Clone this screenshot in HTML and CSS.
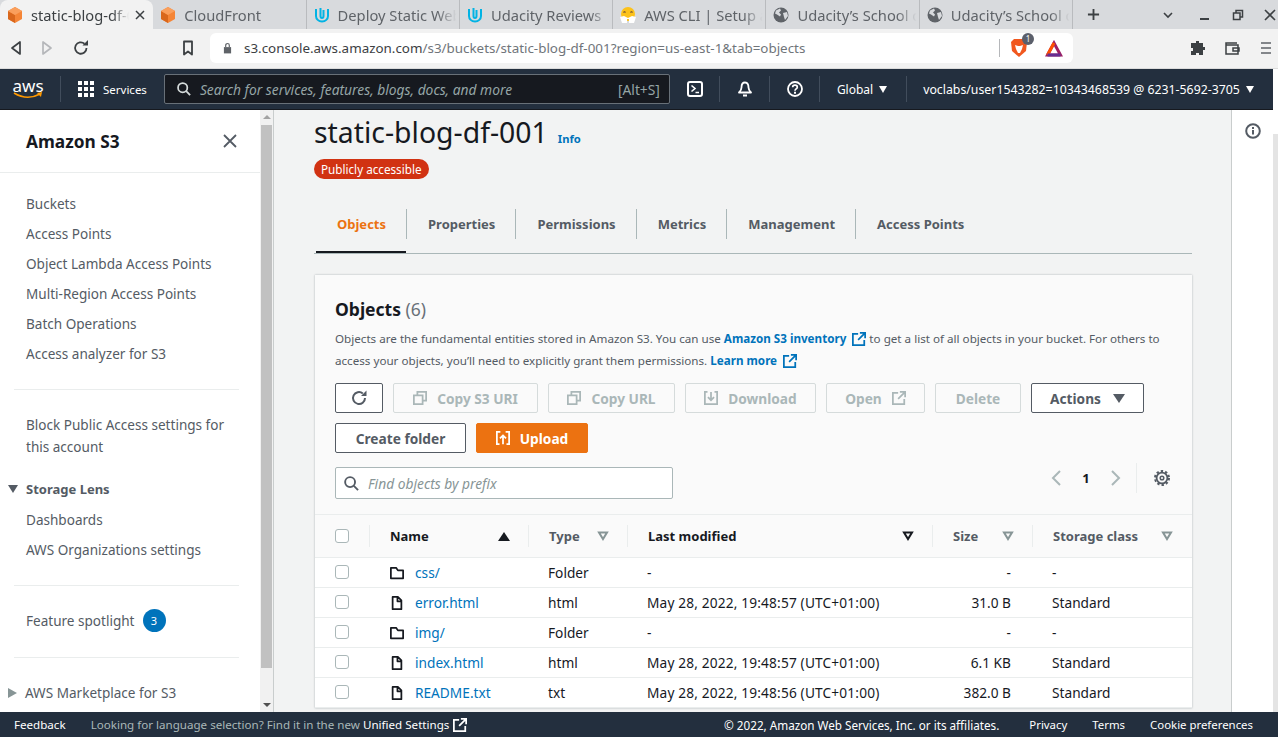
FILE: index.html
```html
<!DOCTYPE html>
<html lang="en">
<head>
  <meta charset="UTF-8" />
  <title>S3 Management Console</title>
  <link rel="stylesheet" href="styles.css">
</head>
<body>
  <svg class="sprite" width="0" height="0">
    <symbol id="cube" viewBox="0 0 16 16">
      <path fill="#f58536" d="M8 0l7 4v8l-7 4-7-4V4z"/>
      <path fill="#d9671c" d="M8 8v8l-7-4V4z"/>
      <path fill="#fa9f5c" d="M8 0l7 4-7 4-7-4z"/>
    </symbol>
    <symbol id="udacity" viewBox="0 0 16 16">
      <path fill="none" stroke="#02b3e4" stroke-width="2" d="M2 2v7c0 3 2.500 5.500 6 5.500S14 12 14 9V2M6.500 1v8c0 1 .6 2 1.500 2s1.500-1 1.500-2V3"/>
    </symbol>
    <symbol id="globe" viewBox="0 0 16 16">
      <circle cx="8" cy="8" r="7.500" fill="#5f6368"/>
      <path fill="#d8dadd" d="M3 3.500l4-2 1 2-2 2 2 2-1 2-3-2-2-1zM10 6l4-1 1 4-3 4-1-3z"/>
    </symbol>
    <symbol id="copy" viewBox="0 0 16 16">
      <path fill="none" stroke="currentColor" stroke-width="2" d="M1 5h10v10H1zM5 5V1h10v10h-4"/>
    </symbol>
    <symbol id="external" viewBox="0 0 16 16">
      <path fill="none" stroke="currentColor" stroke-width="2" d="M7 2H1v13h13V9M9 1h6v6M15 1L7 9"/>
    </symbol>
    <symbol id="folder" viewBox="0 0 16 16">
      <path fill="none" stroke="#16191f" stroke-width="2" stroke-linejoin="round" d="M1 2h6l2 3h6v9H1z"/>
    </symbol>
    <symbol id="file" viewBox="0 0 16 16">
      <path fill="none" stroke="#16191f" stroke-width="2" stroke-linejoin="round" d="M3 1h6l4 4v10H3zM8.500 1v5H13"/>
    </symbol>
    <symbol id="sort" viewBox="0 0 12 10">
      <path fill="none" stroke="currentColor" stroke-width="2" d="M2 1.500h8L6 8z"/>
    </symbol>
    <symbol id="search" viewBox="0 0 16 16">
      <circle cx="6.500" cy="6.500" r="5.300" fill="none" stroke="currentColor" stroke-width="2"/>
      <path stroke="currentColor" stroke-width="2" d="M10.500 10.500L15 15"/>
    </symbol>
  </svg>

  <div class="tabstrip">
    <div class="btab active">
      <svg class="fav"><use href="#cube"/></svg><span class="btab-title">static-blog-df-001</span>
      <svg class="btab-close" viewBox="0 0 10 10"><path stroke="#3c4043" stroke-width="1.500" d="M1 1l8 8M9 1l-8 8"/></svg>
    </div>
    <div class="btab"><svg class="fav"><use href="#cube"/></svg><span class="btab-title">CloudFront</span></div>
    <div class="btab"><svg class="fav"><use href="#udacity"/></svg><span class="btab-title">Deploy Static Website</span></div>
    <div class="btab"><svg class="fav"><use href="#udacity"/></svg><span class="btab-title">Udacity Reviews</span></div>
    <div class="btab">
      <svg class="fav" viewBox="0 0 16 16">
        <circle cx="8" cy="7" r="7" fill="#fcc21b"/>
        <path fill="none" stroke="#5d4037" stroke-width="1.200" d="M3.500 5.500q1-1.500 2 0M10.500 5.500q1-1.500 2 0"/>
        <path fill="#fff" d="M0 10l4-1 4 2 4-2 4 1-2 6H9V12H7v4H2z"/>
      </svg><span class="btab-title">AWS CLI | Setup and Install</span>
    </div>
    <div class="btab"><svg class="fav"><use href="#globe"/></svg><span class="btab-title">Udacity’s School of Cloud</span></div>
    <div class="btab"><svg class="fav"><use href="#globe"/></svg><span class="btab-title">Udacity’s School of Cloud</span></div>
    <svg class="newtab" viewBox="0 0 14 14"><path stroke="#3c4043" stroke-width="2" d="M7 1v12M1 7h12"/></svg>
    <div class="winctl">
      <svg viewBox="0 0 12 12"><path fill="none" stroke="#3c4043" stroke-width="1.600" d="M2 4l4 4 4-4"/></svg>
      <svg viewBox="0 0 12 12"><path stroke="#3c4043" stroke-width="2" d="M1 10h9"/></svg>
      <svg viewBox="0 0 12 12"><path fill="none" stroke="#3c4043" stroke-width="1.500" d="M1.500 4h6.500v6.500H1.500zM4 4V1.500h6.500V8H8"/></svg>
      <svg viewBox="0 0 12 12"><path stroke="#3c4043" stroke-width="1.600" d="M1 1l10 10M11 1L1 11"/></svg>
    </div>
  </div>

  <div class="toolbar">
    <svg class="tool back" viewBox="0 0 12 16"><path fill="none" stroke="#3c4043" stroke-width="1.700" stroke-linejoin="round" d="M10 2v12L2 8z"/></svg>
    <svg class="tool fwd" viewBox="0 0 12 16"><path fill="none" stroke="#b5b7ba" stroke-width="1.700" stroke-linejoin="round" d="M2 2v12l8-6z"/></svg>
    <svg class="tool reload" viewBox="0 0 16 16"><path fill="none" stroke="#3c4043" stroke-width="1.800" d="M13.500 8a5.700 5.700 0 1 1-2-4.300"/><path fill="#3c4043" d="M9.500 5.500h5.500V0z"/></svg>
    <svg class="tool bookmark" viewBox="0 0 12 16"><path fill="none" stroke="#3c4043" stroke-width="1.800" stroke-linejoin="round" d="M2 1.500h8v13l-4-3-4 3z"/></svg>
    <div class="urlbar">
      <svg class="lock" viewBox="0 0 10 12"><path fill="#5f6368" d="M1 5h8v7H1z"/><path fill="none" stroke="#5f6368" stroke-width="1.300" d="M3 5V3a2 2 0 0 1 4 0v2"/></svg>
      <span class="url">s3.console.aws.amazon.com<span class="url-dim">/s3/buckets/static-blog-df-001?region=us-east-1&amp;tab=objects</span></span>
      <span class="url-sep"></span>
      <span class="brave">
        <svg viewBox="0 0 16 18" width="16" height="18"><path fill="#f1581f" d="M3 0h10l3 3-1 9-7 6-7-6-1-9z"/><path fill="#fff" d="M4 6l3 1h2l3-1-1 4-2 4H7L5 10z"/></svg>
        <span class="brave-count">1</span>
      </span>
      <svg class="bat" viewBox="0 0 18 17" width="18" height="17">
        <path fill="none" stroke="#9e1f63" stroke-width="3" d="M9 3L2.500 15h13z"/>
        <path fill="none" stroke="#ff5000" stroke-width="3" d="M9 3L2.500 15"/>
        <path fill="none" stroke="#662d91" stroke-width="3" d="M2.500 15h13"/>
      </svg>
    </div>
    <svg class="tool puzzle" viewBox="0 0 16 16"><path fill="#3c4043" d="M6 1h3v2h4v4h2v3h-2v5H9v-2H6v2H1v-4h2V8H1V3h5z"/></svg>
    <svg class="tool wallet" viewBox="0 0 16 16"><path fill="none" stroke="#3c4043" stroke-width="1.500" d="M13 3H2v11h12v-9H2M9 8h6v3H9z"/></svg>
    <svg class="tool menu" viewBox="0 0 14 14"><path stroke="#5f6368" stroke-width="1.700" d="M2 2h10M2 7h10M2 12h10"/></svg>
  </div>

  <nav class="topnav">
    <div class="logo">
      <span class="logo-text">aws</span>
      <svg viewBox="0 0 30 8" width="30" height="8"><path fill="none" stroke="#ff9900" stroke-width="1.500" d="M1 1q13 8 26 1"/><path fill="#ff9900" d="M24 1l5-1-1 5z"/></svg>
    </div>
    <span class="nav-sep first"></span>
    <svg class="grid-icon" viewBox="0 0 16 16"><path fill="#fff" d="M0 0h4v4H0zM6 0h4v4H6zM12 0h4v4h-4zM0 6h4v4H0zM6 6h4v4H6zM12 6h4v4h-4zM0 12h4v4H0zM6 12h4v4H6zM12 12h4v4h-4z"/></svg>
    <span class="services">Services</span>
    <div class="nav-search">
      <svg class="nav-search-icon"><use href="#search"/></svg>
      <span class="nav-placeholder">Search for services, features, blogs, docs, and more</span>
      <span class="nav-shortcut">[Alt+S]</span>
    </div>
    <svg class="nav-icon term" viewBox="0 0 16 16"><rect x="1" y="1" width="14" height="14" rx="2" fill="none" stroke="#fff" stroke-width="2"/><path fill="none" stroke="#fff" stroke-width="1.600" d="M4.500 4.500L8 7.500l-3.500 3M8.500 11.500H12"/></svg>
    <span class="nav-sep"></span>
    <svg class="nav-icon" viewBox="0 0 16 16"><path fill="none" stroke="#fff" stroke-width="1.800" stroke-linejoin="round" d="M8 1.500c-3 0-3.500 3-3.500 5s-1 3.500-2.500 5h12c-1.500-1.500-2.500-3-2.500-5s-.5-5-3.500-5zM6 14.500h4"/></svg>
    <span class="nav-sep"></span>
    <svg class="nav-icon" viewBox="0 0 16 16"><circle cx="8" cy="8" r="7" fill="none" stroke="#fff" stroke-width="1.800"/><path fill="none" stroke="#fff" stroke-width="1.700" d="M5.700 6.200C5.700 3.500 10.300 3.500 10.300 6.200c0 1.700-2.300 1.700-2.300 3.500"/><path fill="#fff" d="M7 10.800h2v2H7z"/></svg>
    <span class="nav-sep"></span>
    <span class="nav-menu region">Global<i class="caret"></i></span>
    <span class="nav-sep"></span>
    <span class="nav-menu account">voclabs/user1543282=10343468539 @ 6231-5692-3705<i class="caret"></i></span>
  </nav>

  <div class="main">
    <aside class="sidebar">
      <div class="side-head">
        <h2>Amazon S3</h2>
        <svg viewBox="0 0 14 14" width="14" height="14"><path stroke="#545b64" stroke-width="1.800" d="M1 1l12 12M13 1L1 13"/></svg>
      </div>
      <ul class="side-list">
        <li>Buckets</li>
        <li>Access Points</li>
        <li>Object Lambda Access Points</li>
        <li>Multi-Region Access Points</li>
        <li>Batch Operations</li>
        <li>Access analyzer for S3</li>
      </ul>
      <hr class="side-div">
      <p class="side-block">Block Public Access settings for this account</p>
      <div class="side-group"><i class="tri-down"></i>Storage Lens</div>
      <ul class="side-list sub">
        <li>Dashboards</li>
        <li>AWS Organizations settings</li>
      </ul>
      <hr class="side-div">
      <div class="side-spot">Feature spotlight <span class="spot-badge">3</span></div>
      <hr class="side-div">
      <div class="side-market"><i class="tri-right"></i>AWS Marketplace for S3</div>
    </aside>

    <div class="side-scroll">
      <i class="arrow-up"></i>
      <div class="side-thumb"></div>
      <i class="arrow-down"></i>
    </div>

    <main class="content">
      <div class="title-row">
        <h1>static-blog-df-001</h1>
        <a class="info">Info</a>
      </div>
      <span class="public-badge">Publicly accessible</span>

      <div class="ctabs">
        <span class="ctab active">Objects</span>
        <span class="ctab">Properties</span>
        <span class="ctab">Permissions</span>
        <span class="ctab">Metrics</span>
        <span class="ctab">Management</span>
        <span class="ctab">Access Points</span>
      </div>

      <section class="card">
        <div class="card-top">
          <h2 class="card-title">Objects <span class="count">(6)</span></h2>
          <p class="card-desc">Objects are the fundamental entities stored in Amazon S3. You can use <a class="blue">Amazon S3 inventory <svg class="ext"><use href="#external"/></svg></a> to get a list of all objects in your bucket. For others to access your objects, you’ll need to explicitly grant them permissions. <a class="blue">Learn more <svg class="ext"><use href="#external"/></svg></a></p>

          <div class="btn-row">
            <button class="btn refresh"><svg viewBox="0 0 16 16" width="16" height="16"><path fill="none" stroke="#545b64" stroke-width="2" d="M14 8a6 6 0 1 1-2.200-4.600"/><path fill="#545b64" d="M10 6h5.500V.5z"/></svg></button>
            <button class="btn off w-s3uri"><svg class="ico"><use href="#copy"/></svg>Copy S3 URI</button>
            <button class="btn off w-url"><svg class="ico"><use href="#copy"/></svg>Copy URL</button>
            <button class="btn off w-dl"><svg class="ico" viewBox="0 0 16 16"><path fill="none" stroke="currentColor" stroke-width="2" d="M4 1H1v14h14V1h-3M8 1v9M4.500 7L8 10.500 11.500 7"/></svg>Download</button>
            <button class="btn off w-open">Open<svg class="ico after"><use href="#external"/></svg></button>
            <button class="btn off w-del">Delete</button>
            <button class="btn w-act">Actions<i class="btn-caret"></i></button>
          </div>
          <div class="btn-row second">
            <button class="btn w-folder">Create folder</button>
            <button class="btn primary w-up"><svg class="ico" viewBox="0 0 16 16"><path fill="none" stroke="#fff" stroke-width="2" d="M5 1H1v14h3M11 1h4v14h-3M8 15V5M4.500 8.500L8 5l3.500 3.500"/></svg>Upload</button>
          </div>

          <div class="find-row">
            <div class="find">
              <svg class="find-icon"><use href="#search"/></svg>
              <span>Find objects by prefix</span>
            </div>
            <div class="pager">
              <svg viewBox="0 0 10 16" width="10" height="16"><path fill="none" stroke="#aab7b8" stroke-width="2" d="M9 1L2 8l7 7"/></svg>
              <b>1</b>
              <svg viewBox="0 0 10 16" width="10" height="16"><path fill="none" stroke="#aab7b8" stroke-width="2" d="M1 1l7 7-7 7"/></svg>
              <span class="pager-sep"></span>
              <svg viewBox="0 0 16 16" width="16" height="16"><circle cx="8" cy="8" r="5.400" fill="none" stroke="#545b64" stroke-width="1.800"/><circle cx="8" cy="8" r="7" fill="none" stroke="#545b64" stroke-width="2" stroke-dasharray="2.400 2.100"/><circle cx="8" cy="8" r="1.800" fill="none" stroke="#545b64" stroke-width="1.500"/></svg>
            </div>
          </div>
        </div>

        <div class="tbl-head tbl-grid">
          <div class="th chk"><i class="box"></i></div>
          <div class="th dark">Name<i class="sort-up"></i></div>
          <div class="th">Type<svg class="sort"><use href="#sort"/></svg></div>
          <div class="th dark">Last modified<svg class="sort black"><use href="#sort"/></svg></div>
          <div class="th">Size<svg class="sort"><use href="#sort"/></svg></div>
          <div class="th">Storage class<svg class="sort"><use href="#sort"/></svg></div>
        </div>

        <div class="tr tbl-grid">
          <div class="td chk"><i class="box"></i></div>
          <div class="td name"><svg class="obj"><use href="#folder"/></svg><a>css/</a></div>
          <div class="td">Folder</div><div class="td">-</div><div class="td num">-</div><div class="td">-</div>
        </div>
        <div class="tr tbl-grid">
          <div class="td chk"><i class="box"></i></div>
          <div class="td name"><svg class="obj"><use href="#file"/></svg><a>error.html</a></div>
          <div class="td">html</div><div class="td date">May 28, 2022, 19:48:57 (UTC+01:00)</div><div class="td num">31.0 B</div><div class="td">Standard</div>
        </div>
        <div class="tr tbl-grid">
          <div class="td chk"><i class="box"></i></div>
          <div class="td name"><svg class="obj"><use href="#folder"/></svg><a>img/</a></div>
          <div class="td">Folder</div><div class="td">-</div><div class="td num">-</div><div class="td">-</div>
        </div>
        <div class="tr tbl-grid">
          <div class="td chk"><i class="box"></i></div>
          <div class="td name"><svg class="obj"><use href="#file"/></svg><a>index.html</a></div>
          <div class="td">html</div><div class="td date">May 28, 2022, 19:48:57 (UTC+01:00)</div><div class="td num">6.1 KB</div><div class="td">Standard</div>
        </div>
        <div class="tr tbl-grid">
          <div class="td chk"><i class="box"></i></div>
          <div class="td name"><svg class="obj"><use href="#file"/></svg><a>README.txt</a></div>
          <div class="td">txt</div><div class="td date">May 28, 2022, 19:48:56 (UTC+01:00)</div><div class="td num">382.0 B</div><div class="td">Standard</div>
        </div>
      </section>
    </main>

    <aside class="tools">
      <svg viewBox="0 0 16 16" width="16" height="16"><circle cx="8" cy="8" r="6.800" fill="none" stroke="#545b64" stroke-width="2"/><path fill="#545b64" d="M7 7h2v4.500H7zM7 4h2v2H7z"/></svg>
    </aside>
    <div class="page-scroll"><div class="page-thumb"></div></div>
  </div>

  <footer class="footer">
    <span class="foot-feedback">Feedback</span>
    <span class="foot-lang">Looking for language selection? Find it in the new <a>Unified Settings</a></span>
    <svg class="foot-ext"><use href="#external"/></svg>
    <span class="foot-copy">© 2022, Amazon Web Services, Inc. or its affiliates.</span>
    <a class="foot-link">Privacy</a>
    <a class="foot-link">Terms</a>
    <a class="foot-link">Cookie preferences</a>
  </footer>
</body>
</html>
```

FILE: styles.css
```css
html, body {
  margin: 0;
  padding: 0;
  height: 737px;
  overflow: hidden;
  background: #fff;
  font-family: "Noto Sans", sans-serif;
  color: #16191f;
}

body {
  display: flex;
  flex-direction: column;
}

.sprite {
  position: absolute;
}

i {
  display: block;
}

/* browser tabs */
.tabstrip {
  display: flex;
  align-items: center;
  height: 29px;
  flex: none;
  background: #d8dadd;
}

.btab {
  position: relative;
  display: flex;
  align-items: center;
  width: 153.300px;
  height: 29px;
  box-sizing: border-box;
  padding-left: 7px;
  border-right: 1px solid #b9bbbe;
  overflow: hidden;
  flex: none;
  color: #5f6368;
  font-size: 14.700px;
}

.btab:nth-child(1) {
  border-right-color: transparent;
}

.btab.active {
  background: #f2f2f2;
  border-radius: 8px 8px 0 0;
  color: #3c4043;
}

.fav {
  width: 16px;
  height: 16px;
  flex: none;
  margin-right: 8px;
}

.btab-title {
  white-space: nowrap;
  overflow: hidden;
  flex: 1;
  -webkit-mask-image: linear-gradient(to right, #000 82%, transparent 98%);
  mask-image: linear-gradient(to right, #000 82%, transparent 98%);
}

.btab-close {
  width: 10px;
  height: 10px;
  flex: none;
  margin: 0 7px 0 4px;
}

.newtab {
  width: 13px;
  height: 13px;
  margin-left: 14px;
  flex: none;
}

.winctl {
  display: flex;
  align-items: center;
  margin-left: auto;
  gap: 20.500px;
  padding-right: 2px;
}

.winctl svg {
  width: 12px;
  height: 12px;
}

.winctl svg:first-child {
  margin-right: 5px;
}

.toolbar {
  display: flex;
  align-items: center;
  height: 40px;
  flex: none;
  box-sizing: border-box;
  padding: 0 0 1px 10px;
  background: #f2f2f2;
  border-bottom: 1px solid #dcdcdc;
}

.tool {
  flex: none;
}

.back { width: 12px; height: 16px; }
.fwd { width: 12px; height: 16px; margin-left: 19px; }
.reload { width: 16px; height: 16px; margin-left: 20px; }
.bookmark { width: 12px; height: 16px; margin-left: 93px; }
.puzzle { width: 16px; height: 16px; margin-left: 117px; }
.wallet { width: 16px; height: 16px; margin-left: 18px; }
.menu { width: 14px; height: 14px; margin-left: 19px; }

.urlbar {
  display: flex;
  align-items: center;
  width: 863px;
  height: 30px;
  margin-left: 16px;
  background: #fff;
  border-radius: 6px;
  box-sizing: border-box;
  padding-left: 13px;
  font-size: 13.400px;
}

.lock {
  width: 9px;
  height: 12px;
  margin-right: 12px;
  flex: none;
}

.url {
  color: #3c4043;
  white-space: nowrap;
}

.url-dim {
  color: #70757a;
}

.url-sep {
  width: 1px;
  height: 18px;
  background: #b5b7ba;
  margin-left: auto;
}

.brave {
  position: relative;
  display: flex;
  margin-left: 11px;
}

.brave-count {
  position: absolute;
  left: 11px;
  top: -6px;
  width: 12px;
  height: 12px;
  border-radius: 50%;
  background: #5b5f6b;
  color: #fff;
  font-size: 8px;
  line-height: 12px;
  text-align: center;
}

.bat {
  margin: 0 10px 0 18px;
  flex: none;
}

/* aws top nav */
.topnav {
  display: flex;
  align-items: center;
  width: 1273px;
  height: 41px;
  flex: none;
  box-sizing: border-box;
  border-bottom: 1px solid #16191f;
  background: #232f3e;
  color: #fff;
  font-size: 12px;
}

.logo {
  display: flex;
  flex-direction: column;
  align-items: center;
  width: 30px;
  margin-left: 13px;
  flex: none;
}

.logo-text {
  font-size: 17px;
  line-height: 13px;
  height: 14px;
}

.logo svg {
  display: block;
  margin-top: -1px;
}

.nav-sep {
  width: 1px;
  height: 26px;
  background: #414d5c;
  flex: none;
}

.nav-sep.first {
  margin-left: 17px;
}

.grid-icon {
  width: 16px;
  height: 16px;
  margin-left: 17px;
  flex: none;
}

.services {
  margin-left: 9px;
  font-size: 11.500px;
}

.nav-search {
  display: flex;
  align-items: center;
  width: 506px;
  height: 30px;
  margin-left: 17px;
  box-sizing: border-box;
  padding: 0 9px 0 12px;
  background: #16191f;
  border: 1px solid #687078;
  border-radius: 2px;
  flex: none;
}

.nav-search-icon {
  width: 14px;
  height: 14px;
  color: #d5dbdb;
  flex: none;
}

.nav-placeholder {
  margin-left: 9px;
  font-style: italic;
  font-size: 13.800px;
  color: #95a5a6;
  white-space: nowrap;
}

.nav-shortcut {
  margin-left: auto;
  font-size: 13.800px;
  color: #95a5a6;
}

.nav-icon {
  width: 16px;
  height: 16px;
  margin: 0 16px 0 17px;
  flex: none;
}

.nav-menu {
  display: flex;
  align-items: center;
  white-space: nowrap;
}

.region {
  margin: 0 19px 0 17px;
}

.account {
  margin-left: 16px;
  font-size: 12.300px;
}

.caret {
  width: 0;
  height: 0;
  margin-left: 6px;
  border-left: 4.500px solid transparent;
  border-right: 4.500px solid transparent;
  border-top: 7px solid #fff;
}

/* layout below nav */
.main {
  display: flex;
  flex: 1;
  min-height: 0;
  overflow: hidden;
}

.sidebar {
  width: 260px;
  flex: none;
  background: #fff;
  font-size: 13.550px;
  color: #545b64;
}

.side-head {
  display: flex;
  align-items: center;
  justify-content: space-between;
  height: 63px;
  box-sizing: border-box;
  padding: 0 23px 0 26px;
  border-bottom: 1px solid #eaeded;
}

.side-head h2 {
  margin: 0;
  font-size: 17.300px;
  font-weight: 700;
  color: #16191f;
}

.side-list {
  list-style: none;
  margin: 16px 0 0;
  padding: 0 0 0 26px;
}

.side-list li {
  height: 30px;
  line-height: 30px;
}

.side-list.sub {
  margin-top: 0;
}

.side-div {
  margin: 20px 21px 0 14px;
  border: 0;
  border-top: 1px solid #eaeded;
}

.side-block {
  margin: 24px 20px 0 26px;
  line-height: 22px;
}

.side-group {
  display: flex;
  align-items: center;
  margin: 20px 0 0 8px;
  height: 22px;
  font-size: 13px;
  font-weight: 700;
  line-height: 22px;
}

.tri-down {
  width: 0;
  height: 0;
  margin-right: 8px;
  border-left: 5px solid transparent;
  border-right: 5px solid transparent;
  border-top: 8px solid #545b64;
}

.side-group + .side-list {
  margin-top: 5px;
}

.side-spot {
  display: flex;
  align-items: center;
  margin: 23px 0 0 26px;
  height: 23px;
}

.spot-badge {
  display: block;
  width: 23px;
  height: 23px;
  margin-left: 8px;
  border-radius: 50%;
  background: #0073bb;
  color: #fff;
  font-size: 11px;
  line-height: 23px;
  text-align: center;
}

.side-spot + .side-div {
  margin-top: 25px;
}

.side-market {
  display: flex;
  align-items: center;
  margin: 24px 0 0 8px;
  height: 22px;
  white-space: nowrap;
}

.tri-right {
  width: 0;
  height: 0;
  margin-right: 8px;
  border-top: 5px solid transparent;
  border-bottom: 5px solid transparent;
  border-left: 9px solid #879596;
}

.side-scroll {
  width: 14px;
  flex: none;
  display: flex;
  flex-direction: column;
  align-items: center;
  box-sizing: border-box;
  padding: 0 1px;
  background: #f1f1f1;
  border-right: 1px solid #c9cdcd;
}

.arrow-up,
.arrow-down {
  width: 0;
  height: 0;
  border-left: 4px solid transparent;
  border-right: 4px solid transparent;
  flex: none;
}

.arrow-up {
  border-bottom: 4px solid #a3a3a3;
  margin: 5px 0 6px;
}

.arrow-down {
  border-top: 4px solid #505050;
  margin: auto 0 5px;
}

.side-thumb {
  width: 11px;
  height: 543px;
  background: #c1c1c1;
  flex: none;
}

.content {
  width: 958px;
  flex: none;
  box-sizing: border-box;
  padding: 0 39px 0 40px;
  background: #f2f3f3;
  border-right: 1px solid #c9cdcd;
  overflow: hidden;
}

.title-row {
  display: flex;
  align-items: center;
  height: 45px;
}

.title-row h1 {
  margin: 0;
  font-size: 28.400px;
  font-weight: 400;
  line-height: 45px;
  white-space: nowrap;
}

.info,
.blue {
  color: #0073bb;
  font-weight: 700;
}

.info {
  margin: 11px 0 0 10px;
  font-size: 11.200px;
}

.public-badge {
  display: inline-block;
  margin-top: 4px;
  padding: 0 7px;
  height: 20px;
  line-height: 20px;
  border-radius: 10px;
  background: #d13212;
  color: #fff;
  font-size: 11.700px;
  vertical-align: top;
}

.ctabs {
  display: flex;
  margin-top: 22px;
  height: 53px;
  box-sizing: border-box;
  padding-left: 2px;
  border-bottom: 1px solid #aab7b8;
}

.ctab {
  display: block;
  position: relative;
  height: 30px;
  margin-top: 8px;
  padding: 0 20px 0 21px;
  border-right: 1px solid #aab7b8;
  font-size: 13px;
  font-weight: 700;
  line-height: 30px;
  color: #545b64;
  white-space: nowrap;
}

.ctab:last-child {
  border-right: 0;
}

.ctab.active {
  color: #ec7211;
}

.ctab.active::after {
  content: "";
  position: absolute;
  left: 0;
  right: 0;
  bottom: -14px;
  height: 2px;
  background: #16191f;
}

.card {
  margin: 21px 0 0 1px;
  background: #fff;
  box-shadow: 0 0 2px rgba(0, 28, 36, 0.3);
}

.card-top {
  padding: 20px 20px 15px;
  background: #fafafa;
}

.card-title {
  margin: 0;
  font-size: 17.500px;
  font-weight: 700;
  line-height: 28px;
}

.count {
  font-weight: 400;
  color: #687078;
}

.card-desc {
  margin: 5px 0 0;
  font-size: 11.650px;
  line-height: 22px;
  color: #545b64;
}

.ext {
  width: 14px;
  height: 14px;
  margin-left: 3px;
  vertical-align: -3px;
}

.btn-row {
  display: flex;
  gap: 10px;
  margin-top: 11px;
}

.btn-row.second {
  margin-top: 10px;
}

.btn {
  display: flex;
  align-items: center;
  justify-content: center;
  height: 30px;
  box-sizing: border-box;
  padding: 0;
  background: #fff;
  border: 1px solid #545b64;
  border-radius: 2px;
  font-family: inherit;
  font-size: 13.700px;
  font-weight: 700;
  color: #545b64;
  white-space: nowrap;
}

.btn.off {
  background: #fafafa;
  border-color: #d5dbdb;
  color: #aab7b8;
}

.btn.primary {
  background: #ec7211;
  border-color: #ec7211;
  color: #fff;
}

.ico {
  width: 14px;
  height: 14px;
  margin-right: 10px;
  flex: none;
}

.ico.after {
  margin: 0 0 0 10px;
}

.refresh { width: 48px; }
.w-s3uri { width: 145px; }
.w-url { width: 127px; }
.w-dl { width: 131px; }
.w-open { width: 99px; }
.w-del { width: 86px; }
.w-act { width: 113px; }
.w-folder { width: 131px; }
.w-up { width: 112px; }

.btn-caret {
  width: 0;
  height: 0;
  margin-left: 12px;
  border-left: 6px solid transparent;
  border-right: 6px solid transparent;
  border-top: 9px solid #545b64;
}

.find-row {
  display: flex;
  align-items: flex-start;
  justify-content: space-between;
  margin-top: 14px;
}

.find {
  display: flex;
  align-items: center;
  width: 338px;
  height: 32px;
  box-sizing: border-box;
  padding-left: 8px;
  background: #fff;
  border: 1px solid #aab7b8;
  border-radius: 2px;
  font-size: 13.800px;
  font-style: italic;
  color: #879596;
}

.find-icon {
  width: 15px;
  height: 15px;
  margin-right: 9px;
  color: #545b64;
}

.pager {
  display: flex;
  align-items: center;
  height: 30px;
  margin: -4px 2px 0 0;
}

.pager b {
  width: 50px;
  text-align: center;
  font-size: 13px;
}

.pager-sep {
  width: 1px;
  height: 30px;
  margin: 0 17px 0 15px;
  background: #eaeded;
}

.tbl-grid {
  display: grid;
  grid-template-columns: 55px 159px 99px 305px 100px 159px;
  align-items: center;
}

.tbl-head {
  height: 44px;
  box-sizing: border-box;
  background: #fafafa;
  border-top: 1px solid #eaeded;
  border-bottom: 1px solid #eaeded;
}

.th {
  display: flex;
  align-items: center;
  justify-content: space-between;
  height: 22px;
  box-sizing: border-box;
  padding: 0 18px 0 20px;
  border-right: 1px solid #eaeded;
  font-size: 13px;
  font-weight: 700;
  color: #545b64;
}

.th:last-child {
  border-right: 0;
  padding-right: 19px;
}

.th.chk,
.td.chk {
  padding: 0 0 0 20px;
  justify-content: flex-start;
}

.th.dark {
  color: #16191f;
}

.box {
  width: 12px;
  height: 12px;
  background: #fff;
  border: 1px solid #aab7b8;
  border-radius: 3px;
}

.td.chk .box {
  margin-top: -2px;
}

.sort-up {
  width: 0;
  height: 0;
  border-left: 6px solid transparent;
  border-right: 6px solid transparent;
  border-bottom: 9px solid #16191f;
}

.sort {
  width: 12px;
  height: 10px;
  color: #879596;
}

.sort.black {
  color: #16191f;
}

.tr {
  height: 30px;
  border-bottom: 1px solid #eaeded;
  box-sizing: border-box;
  font-size: 13.700px;
}

.td {
  padding-left: 19px;
  white-space: nowrap;
}

.td.date {
  letter-spacing: 0.160px;
}

.td.name {
  display: flex;
  align-items: center;
  padding-left: 20px;
}

.td.name a {
  color: #0073bb;
}

.obj {
  width: 14px;
  height: 14px;
  margin-right: 11px;
  flex: none;
}

.td.num {
  padding: 0 22px 0 0;
  text-align: right;
}

.tools {
  width: 41px;
  flex: none;
  display: flex;
  justify-content: center;
  padding-top: 13px;
  box-sizing: border-box;
  background: #fff;
}

.tools svg {
  display: block;
}

.page-scroll {
  width: 5px;
  flex: none;
  background: #fff;
}

.page-thumb {
  height: 100%;
  margin-top: 24px;
  background: #e4e4e4;
}

.footer {
  display: flex;
  align-items: center;
  height: 25px;
  flex: none;
  box-sizing: border-box;
  padding: 0 25px 0 14px;
  background: #232f3e;
  color: #fff;
  font-size: 11.600px;
}

.foot-lang {
  margin-left: 25px;
  color: #aab7b8;
}

.foot-lang a {
  color: #fff;
}

.foot-ext {
  width: 14px;
  height: 14px;
  margin-left: 4px;
  color: #fff;
}

.foot-copy {
  margin-left: auto;
  margin-right: 30px;
  font-size: 11.700px;
}

.foot-link {
  margin-left: 25px;
  font-size: 11.400px;
}

.foot-copy + .foot-link {
  margin-left: 0;
}
```
